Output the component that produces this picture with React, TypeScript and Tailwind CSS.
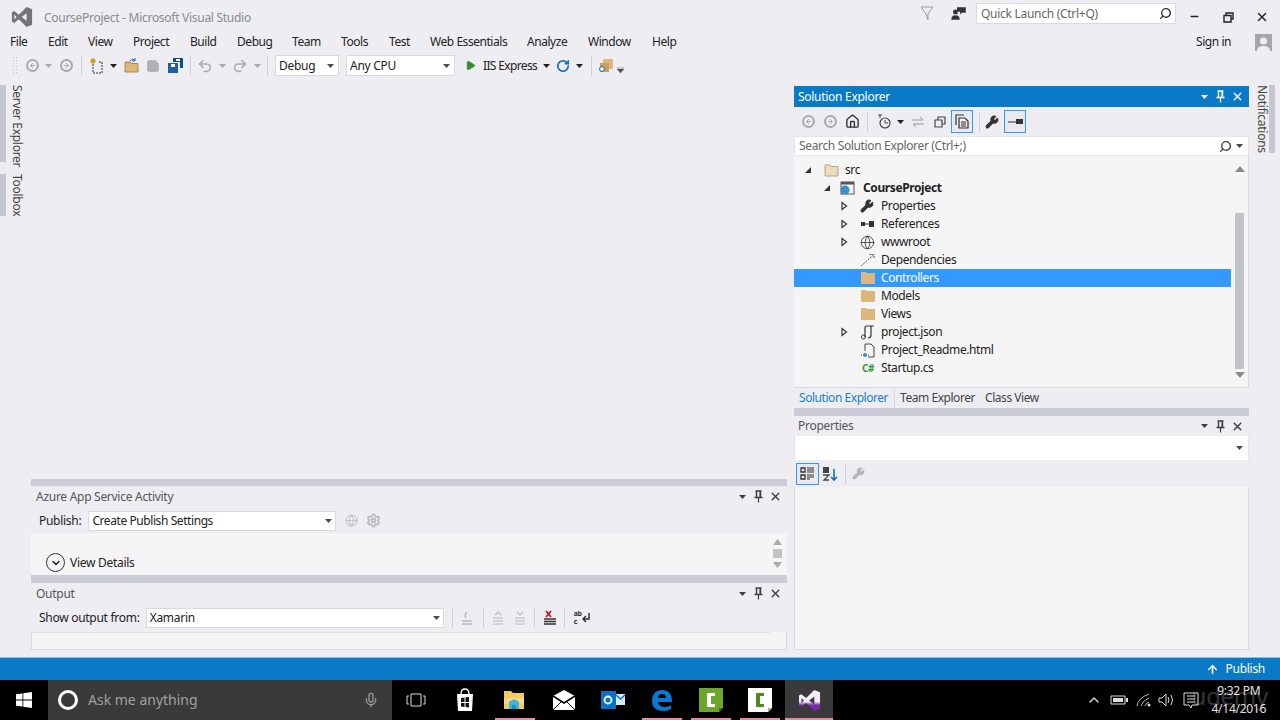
import type { ReactNode } from 'react';
import { Search, Home, Wrench, X, ChevronDown, ChevronUp, Minus, Globe, Settings, Play, RotateCw, ArrowUp, Mic, Undo2, Redo2, Save } from 'lucide-react';

const Caret = ({ className = 'text-[#4a4a4a]' }: { className?: string }) => (
    <svg width="7" height="4" viewBox="0 0 7 4" className={`shrink-0 ${className}`}><path d="M0 0h7L3.5 4z" fill="currentColor" /></svg>
);

const Grip = ({ className = '' }: { className?: string }) => (
    <div className={`h-[5px] flex-1 bg-[radial-gradient(#c4c4cc_0.6px,transparent_0.7px)] bg-[length:2px_2px] ${className}`} />
);

const Sep = ({ className = '' }: { className?: string }) => <div className={`h-[20px] w-px shrink-0 bg-[#cfcfd6] ${className}`} />;

const VS_PATH = 'M17 1L8.5 9.5 3.5 5.5 1 6.8V17.2L3.5 18.5 8.5 14.5 17 23 23 20.5V3.5zM17 7.8V16.2L11.6 12zM3.6 9.3L6.2 12 3.6 14.7z';

const Circle = ({ dir }: { dir: 'l' | 'r' }) => (
    <svg width="13" height="13" viewBox="0 0 13 13" className="shrink-0">
        <circle cx="6.5" cy="6.5" r="5.5" fill="none" stroke="#a9a9ae" strokeWidth="2" />
        <path d={dir === 'l' ? 'M7 4L4.5 6.5 7 9M5 6.5h4' : 'M6 4l2.5 2.5L6 9M8 6.5H4'} fill="none" stroke="#a9a9ae" />
    </svg>
);

const FolderIcon = () => (
    <svg width="16" height="14" viewBox="0 0 16 14"><path d="M1 1h5l1 1h8v11H1z" fill="#dcb67a" /></svg>
);

const PinIcon = () => (
    <svg width="11" height="13" viewBox="0 0 11 13" className="shrink-0">
        <path d="M2.500 1h6M3.500 1v6.500M7.500 1v6.500M1.500 7.500h8" fill="none" stroke="currentColor" strokeWidth="1.4" />
        <path d="M6.500 1.500h1v6h-1z" fill="currentColor" />
        <path d="M5.500 8v4.500" stroke="currentColor" strokeWidth="1.2" />
    </svg>
);

const PanelButtons = ({ light = false }: { light?: boolean }) => {
    const c = light ? 'text-white' : 'text-[#3c3c44]';
    return (
        <div className={`flex items-center ${c}`}>
            <Caret className={c} />
            <div className="ml-[7px]"><PinIcon /></div>
            <X size={13} strokeWidth={2.6} className="ml-[5px]" />
        </div>
    );
};

function PanelHeader({ title, h = 'h-[21px]', pl = 'pl-[5px]' }: { title: string; h?: string; pl?: string }) {
    return (
        <div className={`flex ${h} items-center ${pl} pr-[5px] text-[12px] text-[#555]`}>
            <span>{title}</span>
            <Grip className="mx-[6px]" />
            <PanelButtons />
        </div>
    );
}

const Arrow = ({ open }: { open: boolean }) => (
    <svg width="10" height="10" viewBox="0 0 10 10">
        {open ? <path d="M8 2v6H2z" fill="#333" /> : <path d="M3 1.5L7.5 5 3 8.5z" fill="none" stroke="#333" strokeWidth="1.2" />}
    </svg>
);

interface TreeRow {
    label: string;
    pad: string;
    gap: string;
    text: string;
    icon: ReactNode;
    arrow?: 'open' | 'closed';
    selected?: boolean;
    bold?: boolean;
}

const tree: TreeRow[] = [
    { label: 'src', pad: 'pl-[9px]', gap: 'ml-[11px]', text: 'ml-[5px]', arrow: 'open', icon: <svg width="16" height="14" viewBox="0 0 16 14"><path d="M1 2h5l1 1.5h7V13H1z" fill="#ecdcc0" stroke="#b9a680" /></svg> },
    { label: 'CourseProject', pad: 'pl-[28px]', gap: 'ml-[7px]', text: 'ml-[8px]', arrow: 'open', bold: true, icon: <svg width="16" height="14" viewBox="0 0 16 14"><rect x="2" y="1" width="13" height="12" fill="none" stroke="#555" /><rect x="2" y="1" width="13" height="2.5" fill="#555" /><circle cx="6" cy="9" r="4.5" fill="#3a8fc9" /></svg> },
    { label: 'Properties', pad: 'pl-[45px]', gap: 'ml-[11px]', text: 'ml-[5px]', arrow: 'closed', icon: <Wrench size={14} fill="#333" color="#333" /> },
    { label: 'References', pad: 'pl-[45px]', gap: 'ml-[11px]', text: 'ml-[5px]', arrow: 'closed', icon: <svg width="16" height="14" viewBox="0 0 16 14"><path d="M1 5h4v4H1zM9 4h5v6H9z" fill="#333" /><path d="M5 7h4" stroke="#333" /></svg> },
    { label: 'wwwroot', pad: 'pl-[45px]', gap: 'ml-[11px]', text: 'ml-[5px]', arrow: 'closed', icon: <Globe size={15} color="#333" strokeWidth={1.3} /> },
    { label: 'Dependencies', pad: 'pl-[45px]', gap: 'ml-[11px]', text: 'ml-[5px]', icon: <svg width="16" height="14" viewBox="0 0 16 14"><path d="M1 13L14 1.5M9.5 1.5H14V6" fill="none" stroke="#555" strokeDasharray="2 1" /></svg> },
    { label: 'Controllers', pad: 'pl-[45px]', gap: 'ml-[11px]', text: 'ml-[5px]', selected: true, icon: <FolderIcon /> },
    { label: 'Models', pad: 'pl-[45px]', gap: 'ml-[11px]', text: 'ml-[5px]', icon: <FolderIcon /> },
    { label: 'Views', pad: 'pl-[45px]', gap: 'ml-[11px]', text: 'ml-[5px]', icon: <FolderIcon /> },
    { label: 'project.json', pad: 'pl-[45px]', gap: 'ml-[11px]', text: 'ml-[5px]', arrow: 'closed', icon: <svg width="16" height="15" viewBox="0 0 16 15"><path d="M5 12V3q0-2 2-2h7M11 1v9q0 3-3 3" fill="none" stroke="#333" strokeWidth="1.2" /><circle cx="3.5" cy="12" r="2" fill="none" stroke="#333" /></svg> },
    { label: 'Project_Readme.html', pad: 'pl-[45px]', gap: 'ml-[11px]', text: 'ml-[5px]', icon: <svg width="16" height="15" viewBox="0 0 16 15"><path d="M5 8V1h6l3 3v10H8" fill="none" stroke="#444" /><circle cx="5" cy="12" r="2" fill="#2a8fd0" /><path d="M1 12h1M8 12h1" stroke="#444" /></svg> },
    { label: 'Startup.cs', pad: 'pl-[45px]', gap: 'ml-[11px]', text: 'ml-[5px]', icon: <span className="pl-[2px] text-[10px] font-bold leading-none text-[#3c9a3c]">C#</span> },
];

const menu = [
    ['File', 'w-[38px]'], ['Edit', 'w-[40px]'], ['View', 'w-[45px]'], ['Project', 'w-[57px]'], ['Build', 'w-[47px]'],
    ['Debug', 'w-[55px]'], ['Team', 'w-[49px]'], ['Tools', 'w-[48px]'], ['Test', 'w-[41px]'], ['Web Essentials', 'w-[97px]'],
    ['Analyze', 'w-[61px]'], ['Window', 'w-[64px]'], ['Help', 'w-[40px]'],
];

const Combo = ({ label, w, ml = '' }: { label: string; w: string; ml?: string }) => (
    <div className={`flex h-[21px] ${w} ${ml} shrink-0 items-center justify-between border border-[#d9d9e0] bg-white pl-[3px] pr-[4px] text-[12px] text-[#222]`}>
        <span>{label}</span>
        <Caret />
    </div>
);

const TaskMark = ({ left }: { left: string }) => <div className={`absolute bottom-0 h-[2px] bg-[#e88aa0] ${left}`} />;

export default function App() {
    return (
        <div className="flex h-[720px] w-[1280px] flex-col overflow-hidden bg-[#eeeef2] font-['Noto_Sans',sans-serif] text-[12px] leading-none tracking-[-0.28px] text-[#222]">
            {/* title */}
            <div className="flex h-[32px] shrink-0 pt-[3px]">
                <svg width="22" height="22" viewBox="0 0 24 24" className="ml-[11px] mt-[3px] text-[#74747a]"><path fillRule="evenodd" fill="currentColor" d={VS_PATH} /></svg>
                <span className="ml-[11px] mt-[9px] text-[12px] text-[#8a8a90]">CourseProject - Microsoft Visual Studio</span>
                <div className="ml-auto flex items-start">
                    <svg width="14" height="15" viewBox="0 0 14 15" className="mt-[3px]"><path d="M1 1h12L8 8v6L6 8z" fill="none" stroke="#9a9a9f" /></svg>
                    <svg width="16" height="15" viewBox="0 0 16 15" className="ml-[17px] mt-[3px]"><circle cx="4.5" cy="6" r="2.5" fill="#333" /><path d="M0 14q0-5 4.5-5T9 14zM6 1h9v6h-4l-2 2V6H6" fill="#333" stroke="#eeeef2" strokeWidth="0.5" /></svg>
                    <div className="ml-[9px] flex h-[21px] w-[200px] items-center justify-between border border-[#d9d9e0] bg-white pl-[4px] pr-[3px] text-[12px] text-[#666]">
                        <span>Quick Launch (Ctrl+Q)</span>
                        <Search size={13} strokeWidth={2.6} className="-scale-x-100 text-[#333]" />
                    </div>
                    <Minus size={11} strokeWidth={3.4} className="ml-[13px] mt-[8px] text-[#222]" />
                    <svg width="11" height="11" viewBox="0 0 11 11" className="ml-[23px] mt-[9px]"><path d="M3 3V1h7v6H8M1 3.5h7v6.5H1z" fill="none" stroke="#222" strokeWidth="1.4" /></svg>
                    <X size={14} strokeWidth={2.4} className="ml-[21px] mr-[11px] mt-[7px] text-[#222]" />
                </div>
            </div>
            {/* menu */}
            <div className="flex h-[18px] shrink-0 items-center pl-[10px] pt-[2px] tracking-[-0.45px]">
                {menu.map(([label, w]) => (
                    <span key={label} className={`${w} shrink-0 text-[12px]`}>{label}</span>
                ))}
                <span className="ml-auto text-[12px]">Sign in</span>
                <div className="ml-[24px] mr-[8px] flex h-[17px] w-[17px] items-end justify-center bg-[#a5a5ab]">
                    <svg width="13" height="15" viewBox="0 0 13 15"><circle cx="6.5" cy="5" r="3.5" fill="#eeeef2" /><path d="M0 15q0-5 6.5-5T13 15z" fill="#eeeef2" /></svg>
                </div>
            </div>
            {/* toolbar */}
            <div className="mt-[4px] flex h-[23px] shrink-0 items-center pl-[12px]">
                <div className="h-[19px] w-[5px] shrink-0 bg-[radial-gradient(#c0c0c8_0.7px,transparent_0.8px)] bg-[length:3px_3px]" />
                <div className="ml-[9px] flex items-center">
                    <Circle dir="l" />
                    <Caret className="ml-[6px] text-[#a9a9ae]" />
                </div>
                <div className="ml-[8px]"><Circle dir="r" /></div>
                <Sep className="ml-[8px]" />
                <svg width="15" height="16" viewBox="0 0 15 16" className="ml-[7px] shrink-0"><path d="M4 6v9h9V4H9" fill="none" stroke="#333" strokeDasharray="2 1" /><path d="M4 0v6M1 3h6M2 1l4 4M6 1L2 5" stroke="#c79a1e" strokeWidth="1.1" /></svg>
                <Caret className="ml-[6px]" />
                <svg width="16" height="15" viewBox="0 0 16 15" className="ml-[7px] shrink-0"><path d="M1 4h5l1 1.5h7V14H1z" fill="#dcb67a" stroke="#a98a50" /><path d="M6 3q2-3 5-1M11 0v3H8" fill="none" stroke="#1a6fb5" /></svg>
                <Save size={14} className="ml-[6px] shrink-0 text-[#b0b0b5]" fill="#b0b0b5" />
                <svg width="15" height="15" viewBox="0 0 15 15" className="ml-[8px] shrink-0"><path d="M0 5h10v10H0z" fill="#1c5fa8" /><path d="M5 0h10v10h-3V4H5z" fill="#0f4a8a" /><rect x="3" y="6" width="4" height="3" fill="#fff" /><rect x="8" y="1" width="4" height="2" fill="#fff" /></svg>
                <Sep className="ml-[7px]" />
                <Undo2 size={16} strokeWidth={2.4} className="ml-[6px] shrink-0 text-[#a9a9ae]" />
                <Caret className="ml-[6px] text-[#a9a9ae]" />
                <Redo2 size={16} strokeWidth={2.4} className="ml-[6px] shrink-0 text-[#a9a9ae]" />
                <Caret className="ml-[6px] text-[#a9a9ae]" />
                <Sep className="ml-[6px]" />
                <Combo label="Debug" w="w-[64px]" ml="ml-[7px]" />
                <Combo label="Any CPU" w="w-[109px]" ml="ml-[7px]" />
                <Play size={11} fill="#388a34" className="ml-[10px] shrink-0 text-[#388a34]" />
                <span className="ml-[7px] shrink-0 tracking-[-0.65px]">IIS Express</span>
                <Caret className="ml-[6px]" />
                <RotateCw size={14} strokeWidth={3} className="ml-[6px] shrink-0 text-[#1a6fb5]" />
                <Caret className="ml-[6px]" />
                <Sep className="ml-[8px]" />
                <svg width="16" height="16" viewBox="0 0 16 16" className="ml-[6px] shrink-0"><path d="M5 1h10v10H5z" fill="#dcb67a" /><path d="M2 5h9v9H2z" fill="#c9a05c" /><circle cx="4" cy="11" r="2.5" fill="#eee" stroke="#1a6fb5" /></svg>
                <svg width="7" height="6" viewBox="0 0 7 6" className="ml-[3px] mt-[9px] shrink-0"><path d="M0 0h7M0 2h7L3.5 6z" fill="#555" stroke="#555" strokeWidth="0.5" /></svg>
            </div>

            {/* body */}
            <div className="mt-[3px] flex min-h-0 flex-1">
                {/* left rail */}
                <div className="w-[31px] shrink-0 pt-[5px]">
                    <div className="h-[77px] w-[23px] whitespace-nowrap border-l-[6px] border-[#c6c6d2] pl-[5px] text-[#444] [writing-mode:vertical-rl]">Server Explorer</div>
                    <div className="mt-[12px] h-[42px] w-[23px] whitespace-nowrap border-l-[6px] border-[#c6c6d2] pl-[5px] text-[#444] [writing-mode:vertical-rl]">Toolbox</div>
                </div>

                {/* centre */}
                <div className="flex w-[756px] shrink-0 flex-col pb-[7px]">
                    <div className="flex-1" />
                    <div className="h-[7px] bg-[#ccccd8]" />
                    <PanelHeader title="Azure App Service Activity" />
                    <div className="flex h-[26px] items-center pl-[8px] pt-[1px]">
                        <span>Publish:</span>
                        <div className="ml-[7px] flex h-[20px] w-[248px] items-center justify-between border border-[#d9d9e0] bg-white pl-[3px] pr-[3px] tracking-[-0.42px]">
                            <span>Create Publish Settings</span>
                            <Caret />
                        </div>
                        <Globe size={13} className="ml-[9px] text-[#c4c4c8]" />
                        <Settings size={15} className="ml-[8px] text-[#b8b8bc]" strokeWidth={2.6} />
                    </div>
                    <div className="flex h-[42px] items-end justify-between bg-[#f5f5f5] pl-[15px] pr-[5px]">
                        <div className="flex items-center pb-[3px]">
                            <div className="flex h-[19px] w-[19px] items-center justify-center rounded-full border border-[#333]"><ChevronDown size={12} strokeWidth={3} /></div>
                            <span className="ml-[5px]">View Details</span>
                        </div>
                        <div className="flex flex-col items-center pb-[7px] text-[#a8a8b0]">
                            <svg width="9" height="6" viewBox="0 0 9 6"><path d="M4.5 0L9 6H0z" fill="currentColor" /></svg>
                            <div className="my-[4px] h-[9px] w-[9px] bg-[#c2c3c9]" />
                            <svg width="9" height="6" viewBox="0 0 9 6"><path d="M4.5 6L9 0H0z" fill="currentColor" /></svg>
                        </div>
                    </div>
                    <div className="h-[8px] bg-[#ccccd8]" />
                    <PanelHeader title="Output" h="h-[20px] pt-[1px]" />
                    <div className="flex h-[29px] items-center pl-[8px]">
                        <span>Show output from:</span>
                        <div className="ml-[6px] flex h-[20px] w-[298px] items-center justify-between border border-[#d9d9e0] bg-white pl-[3px] pr-[3px]">
                            <span>Xamarin</span>
                            <Caret />
                        </div>
                        <Sep className="ml-[8px]" />
                        <svg width="12" height="14" viewBox="0 0 12 14" className="ml-[8px]"><path d="M1 10h10M1 13h10M6 1Q3 3 5 7" fill="none" stroke="#b8b8bc" strokeWidth="1.4" /></svg>
                        <Sep className="ml-[10px]" />
                        <svg width="12" height="14" viewBox="0 0 12 14" className="ml-[8px]"><path d="M1 7h10M1 10h10M1 13h10M3 4l3-3 3 3" fill="none" stroke="#b8b8bc" strokeWidth="1.2" /></svg>
                        <svg width="12" height="14" viewBox="0 0 12 14" className="ml-[10px]"><path d="M1 7h10M1 10h10M1 13h10M3 1l3 3 3-3" fill="none" stroke="#b8b8bc" strokeWidth="1.2" /></svg>
                        <Sep className="ml-[8px]" />
                        <svg width="14" height="15" viewBox="0 0 14 15" className="ml-[8px]"><path d="M1 9h12M1 11.5h12M1 14h12" stroke="#333" strokeWidth="1.4" /><path d="M3 1l5 6M8 1L3 7" stroke="#c4161c" strokeWidth="1.8" /></svg>
                        <Sep className="ml-[7px]" />
                        <span className="ml-[9px] text-[7px] font-bold leading-[8px] text-[#333]">ab<br />c</span>
                        <svg width="8" height="11" viewBox="0 0 8 11"><path d="M7 1v6H2M4 4L1 7l3 3" fill="none" stroke="#333" strokeWidth="1.5" /></svg>
                    </div>
                    <div className="h-[18px] border-x border-b border-[#d9d9e0] bg-[#f5f5f5]"><div className="h-px w-[738px] bg-[#e2e2e6]" /></div>
                </div>

                <div className="w-[7px] shrink-0" />

                {/* right */}
                <div className="flex w-[455px] shrink-0 flex-col pb-[7px] pt-[6px]">
                    <div className="flex h-[21px] items-center bg-[#0a7ac6] pl-[4px] pr-[5px] text-white">
                        <span>Solution Explorer</span>
                        <Grip className="mx-[6px] opacity-40" />
                        <PanelButtons light />
                    </div>
                    <div className="flex h-[29px] items-center pl-[8px]">
                        <Circle dir="l" />
                        <div className="ml-[9px]"><Circle dir="r" /></div>
                        <Home size={15} strokeWidth={2.2} className="ml-[8px] text-[#333]" />
                        <Sep className="ml-[7px]" />
                        <svg width="15" height="15" viewBox="0 0 15 15" className="ml-[9px]"><circle cx="8" cy="9" r="5" fill="none" stroke="#444" strokeWidth="1.2" /><path d="M8 6v3h3M1 1h4M3 1v3" fill="none" stroke="#444" /></svg>
                        <Caret className="ml-[5px]" />
                        <svg width="14" height="12" viewBox="0 0 14 12" className="ml-[7px]"><path d="M1 4h11M9 1l3 3M13 8H2M5 11L2 8" fill="none" stroke="#b4b4ba" strokeWidth="1.4" /></svg>
                        <svg width="12" height="12" viewBox="0 0 12 12" className="ml-[9px]"><path d="M1 4h7v7H1zM4 4V1h7v7H8" fill="none" stroke="#444" strokeWidth="1.2" /></svg>
                        <div className="ml-[5px] flex h-[23px] w-[22px] items-center justify-center border border-[#3399ff] bg-[#e9e9ef]">
                            <svg width="15" height="15" viewBox="0 0 15 15"><path d="M1 11V1h8M4 14V4h6l3 3v7z" fill="none" stroke="#333" strokeWidth="1.2" /><path d="M6 8h5M6 10h5M6 12h5" stroke="#333" /></svg>
                        </div>
                        <Sep className="ml-[6px]" />
                        <Wrench size={14} fill="#333" strokeWidth={2} className="ml-[5px] text-[#333]" />
                        <div className="ml-[5px] flex h-[23px] w-[22px] items-center justify-center border border-[#3399ff] bg-[#e9e9ef]">
                            <svg width="15" height="5" viewBox="0 0 15 5"><path d="M0 3h8" stroke="#333" /><path d="M8 0h7v5H8z" fill="#333" /></svg>
                        </div>
                    </div>
                    <div className="flex h-[20px] items-center justify-between border border-[#e4e4ea] bg-white pl-[4px] pr-[5px] tracking-[-0.35px] text-[#666]">
                        <span>Search Solution Explorer (Ctrl+;)</span>
                        <div className="flex items-center text-[#444]">
                            <Search size={13} strokeWidth={2.6} className="-scale-x-100" />
                            <Caret className="ml-[4px]" />
                        </div>
                    </div>
                    {/* tree */}
                    <div className="flex h-[232px] border-b border-r border-[#d9d9e0] bg-[#f5f5f5] tracking-[-0.4px]">
                        <div className="w-[437px] shrink-0 pt-[5px]">
                            {tree.map(row => (
                                <div key={row.label} className={`flex h-[18px] items-center ${row.pad} ${row.selected ? 'bg-[#3399ff] text-white' : ''}`}>
                                    <div className="flex w-[10px] shrink-0 justify-center">{row.arrow && <Arrow open={row.arrow === 'open'} />}</div>
                                    <div className={`flex h-[16px] w-[16px] shrink-0 items-center ${row.gap}`}>{row.icon}</div>
                                    <span className={`${row.text} ${row.bold ? 'font-bold' : ''}`}>{row.label}</span>
                                </div>
                            ))}
                        </div>
                        <div className="flex flex-1 flex-col items-center pb-[3px] pt-[10px] text-[#8a8a90]">
                            <svg width="10" height="6" viewBox="0 0 10 6"><path d="M5 0l5 6H0z" fill="currentColor" /></svg>
                            <div className="mt-[41px] h-[156px] w-[9px] bg-[#c2c3c9]" />
                            <svg width="10" height="6" viewBox="0 0 10 6" className="mt-[3px]"><path d="M5 6l5-6H0z" fill="currentColor" /></svg>
                        </div>
                    </div>
                    {/* tabs */}
                    <div className="flex h-[20px] items-center whitespace-nowrap tracking-[-0.45px]">
                        <span className="flex h-[20px] w-[100px] shrink-0 items-center pl-[5px] text-[#1a7fc8]">Solution Explorer</span>
                        <div className="flex h-[20px] flex-1 items-center border-l border-[#d9d9e0] pl-[5px] text-[#444]">
                            <span>Team Explorer</span>
                            <span className="ml-[10px]">Class View</span>
                        </div>
                    </div>
                    <div className="h-[8px] bg-[#ccccd8]" />
                    <PanelHeader title="Properties" h="h-[20px]" pl="pl-[4px]" />
                    <div className="flex h-[24px] items-center justify-end border-x border-[#e4e4ea] bg-white pr-[5px]"><Caret /></div>
                    <div className="flex h-[27px] items-center pl-[2px]">
                        <div className="flex h-[22px] w-[23px] items-center justify-center border border-[#3399ff] bg-[#e9e9ef]">
                            <svg width="15" height="15" viewBox="0 0 15 15"><path d="M1 2h4v4H1zM1 9h4v4H1z" fill="none" stroke="#333" strokeWidth="1.3" /><path d="M7 2h7M7 4h7M7 6h7M7 9h7M7 11h7M7 13h3" stroke="#333" /></svg>
                        </div>
                        <svg width="16" height="16" viewBox="0 0 16 16" className="ml-[3px]"><path d="M1 1h6v6H1z" fill="#444" /><path d="M1 9h6L2 14h5" fill="none" stroke="#444" strokeWidth="1.3" /><path d="M12 3v11M9 11l3 3 3-3" fill="none" stroke="#1a6fb5" strokeWidth="1.6" /></svg>
                        <Sep className="ml-[7px]" />
                        <Wrench size={13} fill="#b4b4ba" className="ml-[6px] text-[#b4b4ba]" />
                    </div>
                    <div className="flex-1 border-x border-b border-[#d9d9e0] bg-[#f5f5f5]" />
                </div>

                {/* right rail */}
                <div className="flex-1 pl-[7px] pt-[5px]">
                    <div className="h-[68px] w-[19px] whitespace-nowrap border-r-[6px] border-[#c6c6d2] pr-[1px] text-[#444] [writing-mode:vertical-rl]">Notifications</div>
                </div>
            </div>

            {/* status bar */}
            <div className="flex h-[23px] shrink-0 items-center justify-end border-t border-[#8fc2e6] bg-[#0a7ac6] pr-[15px] text-white">
                <ArrowUp size={13} strokeWidth={3} />
                <span className="ml-[7px]">Publish</span>
            </div>

            {/* taskbar */}
            <div className="relative flex h-[40px] shrink-0 items-center bg-black text-white">
                <svg width="16" height="16" viewBox="0 0 16 16" className="ml-[16px] shrink-0"><path d="M0 2.3l6.5-.9V7.6H0zM7.3 1.3L16 0v7.6H7.3zM0 8.4h6.5v6.2L0 13.7zM7.3 8.4H16V16l-8.7-1.2z" fill="#fff" /></svg>
                <div className="ml-[16px] flex h-[40px] w-[344px] shrink-0 items-center bg-[#3a3a3a]">
                    <div className="ml-[10px] h-[20px] w-[20px] rounded-full border-[3px] border-white" />
                    <span className="ml-[10px] text-[14px] tracking-normal text-[#a0a0a0]">Ask me anything</span>
                    <Mic size={16} className="ml-auto mr-[13px] text-[#999]" />
                </div>
                <svg width="20" height="14" viewBox="0 0 20 14" className="ml-[14px] shrink-0"><path d="M5 1h10v12H5zM3 3H1v8h2M17 3h2v8h-2" fill="none" stroke="#ddd" /></svg>
                <svg width="20" height="24" viewBox="0 0 20 24" className="ml-[29px] shrink-0"><path d="M2 6h16l-1 17H3z" fill="#fff" /><path d="M6 6q0-5 4-5t4 5" fill="none" stroke="#fff" strokeWidth="1.3" /><path d="M6 10l3.500-.5V14H6zM10.500 9.300L14 9v5h-3.500zM6 15h3.500v4L6 18.500zM10.500 15H14v4.500l-3.500-.5z" fill="#111" /></svg>
                <svg width="22" height="20" viewBox="0 0 22 20" className="ml-[28px] shrink-0"><path d="M1 1h7l2 2h11v16H1z" fill="#f4c95d" /><path d="M1 8h20v6H1z" fill="#f0d890" /><path d="M6 19v-7l5-3 5 3v7z" fill="#39b5d8" /><path d="M9 19v-4h4v4z" fill="#1d8fc0" /></svg>
                <svg width="24" height="20" viewBox="0 0 24 20" className="ml-[27px] shrink-0"><path d="M1 6l11-6 11 6v14H1z" fill="#fff" /><path d="M1 6l11 7 11-7" fill="none" stroke="#000" strokeWidth="1.5" /><path d="M1 20l9-9M23 20l-9-9" stroke="#000" /></svg>
                <svg width="24" height="20" viewBox="0 0 24 20" className="ml-[25px] shrink-0"><path d="M0 1h15v18H0z" fill="#0a72c6" /><path d="M15 4h9v11h-9z" fill="#d6eaf8" /><circle cx="7" cy="10" r="3.500" fill="none" stroke="#fff" strokeWidth="1.8" /><path d="M15 5l4.500 4L24 5" stroke="#0a72c6" fill="none" strokeWidth="1.4" /></svg>
                <svg width="22" height="22" viewBox="0 0 22 22" className="ml-[26px] shrink-0"><path d="M1 11Q2 1 11 1q10 0 10 12H7q.5 5 7 5 4 0 6-2v4q-3 2-7 2Q1 22 1 11zM7 9h8q0-4-4-4T7 9z" fill="#0a78d4" /></svg>
                <svg width="24" height="24" viewBox="0 0 24 24" className="ml-[26px] shrink-0"><path d="M0 0h24v20l-4 4H0z" fill="#6da62c" /><path d="M20 24v-4h4z" fill="#3f6f14" /><path d="M8 5h8v3h-4v8h4v3H8z" fill="#fff" /></svg>
                <svg width="24" height="24" viewBox="0 0 24 24" className="ml-[25px] shrink-0"><path d="M0 0h24v20l-4 4H0z" fill="#fff" /><path d="M20 24v-4h4z" fill="#9dbb78" /><path d="M8 5h8v3h-4v8h4v3H8z" fill="#4c8a1e" /></svg>
                <div className="ml-[13px] flex h-[40px] w-[48px] shrink-0 items-center justify-center bg-[#3a3a3a]">
                    <svg width="23" height="23" viewBox="0 0 24 24">
                        <defs><linearGradient id="vsgrad" x1="0" y1="0" x2="0" y2="1"><stop offset="0.55" stopColor="#f4ecfa" /><stop offset="0.72" stopColor="#7a2aa8" /></linearGradient></defs>
                        <path fillRule="evenodd" fill="url(#vsgrad)" d={VS_PATH} />
                    </svg>
                </div>
                <div className="ml-auto flex items-center">
                    <ChevronUp size={16} className="text-[#ddd]" />
                    <svg width="18" height="10" viewBox="0 0 18 10" className="ml-[8px]"><path d="M1 1h14v8H1z" fill="none" stroke="#ddd" /><path d="M3 3h10v4H3z" fill="#ddd" /><path d="M16 3h2v4h-2z" fill="#ddd" /></svg>
                    <svg width="16" height="14" viewBox="0 0 16 14" className="ml-[8px]"><path d="M1 13Q2 5 13 1M5 13q1-5 8-8M9 13q.5-3 4-4" fill="none" stroke="#bbb" /><circle cx="13" cy="12" r="1.500" fill="#ddd" /></svg>
                    <svg width="16" height="14" viewBox="0 0 16 14" className="ml-[6px]"><path d="M1 5h3l4-4v12L4 9H1z" fill="none" stroke="#ddd" /><path d="M10 4q2 3 0 6M13 2q3 5 0 10" fill="none" stroke="#ddd" /></svg>
                    <svg width="16" height="17" viewBox="0 0 16 17" className="ml-[9px]"><path d="M1 1h14v12H9l-1 3-2-3H1z" fill="none" stroke="#ddd" /><path d="M4 4h8M4 7h8M4 10h8" stroke="#ddd" /></svg>
                    <div className="ml-[13px] mr-[14px] flex flex-col items-center gap-[6px] text-[12px] text-[#e0e0e0]">
                        <span>9:32 PM</span>
                        <span>4/14/2016</span>
                    </div>
                </div>
                <span className="absolute right-[12px] top-[4px] text-[24px] text-white opacity-20">udemy</span>
                <TaskMark left="left-[495px] w-[40px]" />
                <TaskMark left="left-[642px] w-[40px]" />
                <TaskMark left="left-[691px] w-[40px]" />
                <TaskMark left="left-[740px] w-[40px]" />
                <TaskMark left="left-[785px] w-[48px]" />
            </div>
        </div>
    );
}
